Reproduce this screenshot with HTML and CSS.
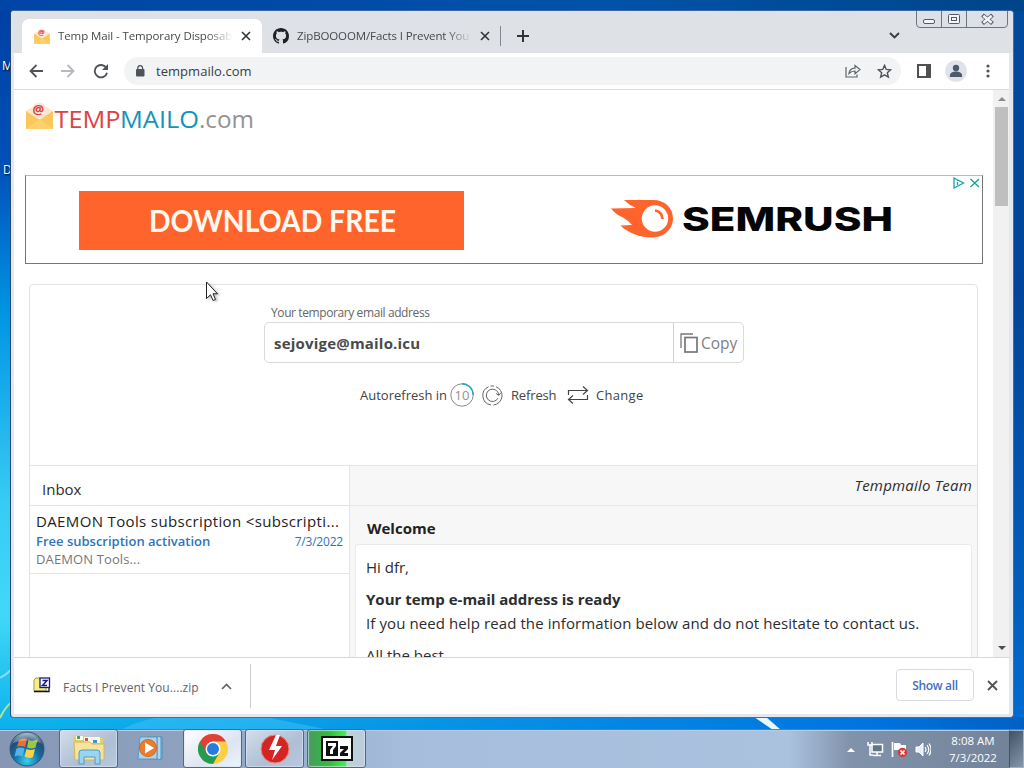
FILE: index.html
```html
<!DOCTYPE html>
<html lang="en">
<head>
<meta charset="utf-8">
<title>Temp Mail - Temporary Disposable Email</title>
<link rel="stylesheet" href="styles.css">
</head>
<body>
<div class="desktop">
  <svg class="wallpaper" viewBox="0 0 1024 768">
    <path d="M0 678 Q7 674 12 669" stroke="#8bdcff" stroke-width="2" fill="none"/>
    <path d="M0 718 Q5 707 12 702" stroke="#b3e58b" stroke-width="2" fill="none"/>
    <path d="M120 730 Q150 714 180 718 L270 718 L330 730Z" fill="#48c6fb" opacity=".45"/>
    <path d="M754 717 L766 717 L781 730 L773 730Z" fill="#e8f8ff"/>
  </svg>
  <span class="icon-label label-m">M</span>
  <span class="icon-label label-d">D</span>

  <div class="workspace">
    <div class="window">
      <div class="tabstrip">
        <div class="tab tab-active">
          <svg class="mail-icon" width="16" height="15" viewBox="0 0 27 26"><use href="#mail"/></svg>
          <span class="tab-title title-one">Temp Mail - Temporary Disposab</span>
          <svg width="10" height="10" viewBox="0 0 10 10"><path d="M1 1l8 8M9 1l-8 8" stroke="#303338" stroke-width="1.6"/></svg>
        </div>
        <div class="tab tab-idle">
          <svg width="16" height="16" viewBox="0 0 16 16"><path fill="#1f2328" d="M8 0C3.58 0 0 3.58 0 8c0 3.54 2.29 6.53 5.47 7.59.4.07.55-.17.55-.38 0-.19-.01-.82-.01-1.49-2.01.37-2.53-.49-2.69-.94-.09-.23-.48-.94-.82-1.13-.28-.15-.68-.52-.01-.53.63-.01 1.08.58 1.23.82.72 1.21 1.87.87 2.33.66.07-.52.28-.87.51-1.07-1.78-.2-3.64-.89-3.64-3.95 0-.87.31-1.59.82-2.15-.08-.2-.36-1.02.08-2.12 0 0 .67-.21 2.2.82.64-.18 1.32-.27 2-.27s1.36.09 2 .27c1.53-1.04 2.2-.82 2.2-.82.44 1.1.16 1.92.08 2.12.51.56.82 1.27.82 2.15 0 3.07-1.87 3.75-3.65 3.95.29.25.54.73.54 1.48 0 1.07-.01 1.93-.01 2.2 0 .21.15.46.55.38A8.01 8.01 0 0 0 16 8c0-4.42-3.58-8-8-8z"/></svg>
          <span class="tab-title title-two">ZipBOOOOM/Facts I Prevent You</span>
          <svg width="10" height="10" viewBox="0 0 10 10"><path d="M1 1l8 8M9 1l-8 8" stroke="#303338" stroke-width="1.6"/></svg>
        </div>
        <span class="tab-sep"></span>
        <svg class="new-tab" width="12" height="12" viewBox="0 0 12 12"><path d="M6 0v12M0 6h12" stroke="#303338" stroke-width="2"/></svg>
        <svg class="tab-search" width="11" height="7" viewBox="0 0 11 7"><path d="M1 1l4.500 4.500L10 1" fill="none" stroke="#3a3d42" stroke-width="1.900"/></svg>
        <svg class="caption" width="94" height="18" viewBox="0 0 94 18">
          <path d="M1.500 0v13q0 3.500 3.500 3.500h84q3.500 0 3.500-3.500V0M26.500 0v16.500M51.500 0v16.500" fill="#dde0e6" stroke="#6f757f"/>
          <g fill="#f4f5f7" stroke="#535a66"><rect x="8.500" y="8.500" width="11" height="4" rx="1.500"/><rect x="33.500" y="3.500" width="11" height="9" rx="1"/><rect x="36.500" y="6.500" width="5" height="3"/></g>
          <path d="M67.500 4l10 8.500M77.500 4l-10 8.500" stroke="#535a66" stroke-width="4.200"/><path d="M68.300 4.700l8.400 7.100M76.700 4.700l-8.400 7.100" stroke="#f4f5f7" stroke-width="2.500"/>
        </svg>
      </div>

      <div class="toolbar">
        <svg width="14" height="14" viewBox="0 0 14 14"><path d="M14 7H1.500M7.500 1l-6 6 6 6" fill="none" stroke="#505459" stroke-width="1.800"/></svg>
        <svg width="14" height="14" viewBox="0 0 14 14"><path d="M0 7h12.500M6.500 1l6 6-6 6" fill="none" stroke="#b6b9bd" stroke-width="1.800"/></svg>
        <svg width="16" height="16" viewBox="0 0 16 16"><path d="M13.200 4.800A6.200 6.200 0 1 0 14 9.700" fill="none" stroke="#505459" stroke-width="1.900"/><path d="M15 1V7H9z" fill="#505459"/></svg>
        <div class="omnibox">
          <svg width="10" height="12" viewBox="0 0 10 12"><rect x="1" y="4" width="8.500" height="7.500" rx="1" fill="#50545a"/><path d="M2.800 5V3a2.400 2.400 0 0 1 4.800 0v2" fill="none" stroke="#50545a" stroke-width="1.300"/></svg>
          <span class="url">tempmailo.com</span>
          <svg class="share" width="16" height="14" viewBox="0 0 16 14"><path d="M1 3v10h11v-2.500M4 9.500C4.500 6 7 4.300 10 4.200V1.500L15 5.600 10 9.800V7Q6.500 7 4 9.500Z" fill="none" stroke="#5f6368" stroke-width="1.200"/></svg>
          <svg width="15" height="15" viewBox="0 0 16 16"><path d="M8 1.500l1.900 4.300 4.700.4-3.600 3.100 1.100 4.600L8 11.500l-4.100 2.400L5 9.300 1.400 6.200l4.700-.4z" fill="none" stroke="#505459" stroke-width="1.500"/></svg>
        </div>
        <svg class="side" width="14" height="14" viewBox="0 0 14 14"><rect x="1" y="1" width="12" height="12" fill="#fff" stroke="#505050" stroke-width="2"/><path d="M9 0h5v14H9z" fill="#505050"/></svg>
        <svg class="avatar" width="22" height="22" viewBox="0 0 22 22"><circle cx="11" cy="11" r="10.800" fill="#dfe2e8"/><circle cx="11" cy="8" r="3.200" fill="#4f596b"/><path d="M4.900 17v-1.500c0-5.200 12.200-5.200 12.200 0V17z" fill="#4f596b"/></svg>
        <svg class="dots" width="4" height="14" viewBox="0 0 4 14" fill="#505459"><circle cx="2" cy="2" r="1.600"/><circle cx="2" cy="7" r="1.600"/><circle cx="2" cy="12" r="1.600"/></svg>
      </div>

      <div class="viewport">
        <main class="page">
          <header class="site-head">
            <svg class="logo" width="230" height="30" viewBox="0 0 230 30">
              <g id="mail"><path d="M0 8L13.500 0 27 8v18H0z" fill="#fce7c7"/><circle cx="13" cy="7" r="7.500" fill="#fbe9df"/><path d="M0 8l13.500 9L27 8v18H0z" fill="#f9c75c"/><path d="M0 26l13.500-10L27 26z" fill="#ffd06b"/><text x="6.500" y="11" class="at">@</text></g>
              <g class="logo-text"><text x="28.500" y="25" fill="#dc4348" textLength="66" lengthAdjust="spacingAndGlyphs">TEMP</text><text x="94" y="25" fill="#1694b7" textLength="79" lengthAdjust="spacingAndGlyphs">MAILO</text><text x="173" y="25" fill="#939393" textLength="55" lengthAdjust="spacingAndGlyphs">.com</text></g>
            </svg>
          </header>

          <section class="ad">
            <div class="ad-button"><svg width="250" height="44" viewBox="0 0 250 44"><text class="download" x="2" y="34" textLength="247" lengthAdjust="spacingAndGlyphs">DOWNLOAD FREE</text></svg></div>
            <svg class="semrush" width="284" height="42" viewBox="0 0 284 42">
              <path d="M13 2H42C54 2 62 10 62 20.500S53 39.500 41 39.500C29 39.500 17 35 9.500 27.500L21 27Q18 23 12 19.500Q4 16 0 10.500L25 10Q18 7 13 2Z" fill="#ff642d"/><circle cx="44" cy="20.500" r="13.200" fill="#fff"/><path d="M44 12.500Q51 13.500 51.500 21" fill="none" stroke="#ff642d" stroke-width="2.700"/>
              <text class="brand" x="71" y="33" textLength="211" lengthAdjust="spacingAndGlyphs">SEMRUSH</text>
            </svg>
            <svg class="ad-controls" width="30" height="14" viewBox="0 0 30 14"><path d="M2 2v10l9.500-5zM5.500 6v3M5.500 4v1" fill="none" stroke="#12a5a2" stroke-width="1.300"/><path d="M18.500 3l8.500 8M27 3l-8.500 8" stroke="#12a58d" stroke-width="1.300"/></svg>
          </section>

          <section class="mailbox">
            <div class="address-area">
              <label class="address-label">Your temporary email address</label>
              <div class="address">
                <strong>sejovige@mailo.icu</strong>
                <div class="copy"><svg width="18" height="20" viewBox="0 0 18 20" fill="none" stroke="#777"><path d="M1 15V1h12" stroke-width="1.300"/><rect x="5" y="4.500" width="12" height="14.500" stroke-width="1.700"/></svg><span>Copy</span></div>
              </div>
              <div class="actions">
                <span class="auto">Autorefresh in</span>
                <span class="timer"><svg width="24" height="24" viewBox="0 0 24 24" fill="none"><circle cx="12" cy="12" r="11.200" stroke="#8b8b8b"/><path d="M12 .8A11.200 11.200 0 0 1 23.200 12" stroke="#22a6c5" stroke-width="1.400"/></svg><b>10</b></span>
                <svg class="refresh-icon" width="21" height="21" viewBox="0 0 21 21" fill="none" stroke="#666"><path d="M6.500 1.800A9.500 9.500 0 0 0 9 19.900M11.500 20A9.500 9.500 0 0 0 14 1.700M8.500 1.100A9.500 9.500 0 0 1 12 1.100"/><path d="M16 13.200A6.200 6.200 0 1 1 16.700 10M14.200 8.500l2.500 2 2-2.500"/></svg>
                <span class="refresh">Refresh</span>
                <svg class="change-icon" width="22" height="18" viewBox="0 0 22 18" fill="none" stroke="#444" stroke-width="1.200"><path d="M1.500 9V4.500H20M16 .5l4.500 4-4.500 4M20.500 9v4.500H2M6 9.500l-4.500 4 4.500 4"/></svg>
                <span class="change">Change</span>
              </div>
            </div>
            <div class="columns">
              <aside class="inbox">
                <h2>Inbox</h2>
                <article class="mail-row">
                  <div class="sender">DAEMON Tools subscription &lt;subscripti...</div>
                  <div class="subject"><b>Free subscription activation</b><time>7/3/2022</time></div>
                  <p>DAEMON Tools...</p>
                </article>
              </aside>
              <section class="message">
                <div class="from"><em>Tempmailo Team</em></div>
                <h3>Welcome</h3>
                <div class="letter">
                  <p class="hi">Hi dfr,</p>
                  <p class="ready">Your temp e-mail address is ready</p>
                  <p class="help">If you need help read the information below and do not hesitate to contact us.</p>
                  <p class="best">All the best</p>
                </div>
              </section>
            </div>
          </section>
        </main>
        <div class="scrollbar"><i class="up"></i><i class="thumb"></i><i class="down"></i></div>
      </div>

      <div class="downloads">
        <div class="file">
          <svg class="zip-icon" width="18" height="16" viewBox="0 0 18 16"><path d="M1 3l2-2h4v2h6v11H1z" fill="#f4ee87" stroke="#a09b4a"/><path d="M1 14.500h15V11" fill="none" stroke="#111" stroke-width="1.300"/><rect x="7" y="1" width="9.500" height="9.500" fill="#fff" stroke="#1a1a85" stroke-width="1.300"/><path d="M9.500 3.500h4.500l-4.500 5H14" fill="none" stroke="#1a1a85" stroke-width="1.500"/></svg>
          <span class="filename">Facts I Prevent You....zip</span>
          <svg width="11" height="7" viewBox="0 0 11 7"><path d="M1 6l4.500-4.500L10 6" fill="none" stroke="#5f6368" stroke-width="1.600"/></svg>
        </div>
        <span class="show-all"><span>Show all</span></span>
        <svg class="close-bar" width="11" height="11" viewBox="0 0 11 11"><path d="M1 1l9 9M10 1l-9 9" stroke="#50545a" stroke-width="1.800"/></svg>
      </div>
    </div>
  </div>

  <footer class="taskbar">
    <svg class="start" width="36" height="36" viewBox="0 0 36 36">
      <defs><radialGradient id="orb" cx=".5" cy=".85" r=".85"><stop offset="0" stop-color="#38d0ef"/><stop offset=".45" stop-color="#126da3"/><stop offset=".75" stop-color="#234d75"/><stop offset="1" stop-color="#9eb7cb"/></radialGradient></defs>
      <circle cx="18" cy="18" r="17" fill="url(#orb)" stroke="#365571"/>
      <path d="M10 9q4-3 8-1l-2 8q-4-2-8 0z" fill="#ed6e33"/><path d="M19.500 9q4 2 9-.5l-2 8q-4 2-8.500 0z" fill="#9cc93c"/><path d="M7.500 17.500q4-2 8 0l-2 8q-4-2-8 0z" fill="#54b4ea"/><path d="M17.500 18q4 2 8.500 0l-2 8q-4 2-8.500-.500z" fill="#fbd14b"/>
      <path d="M4 12Q18-8 32 12 17 7 4 12z" fill="#fff" opacity=".25"/>
    </svg>
    <div class="task framed">
      <svg width="34" height="32" viewBox="0 0 34 32"><path d="M1 5l2-3h9l2 3h17v21H3z" fill="#e4cf72"/><path d="M12 4h16v6H12z" fill="#fff8ea"/><path d="M4 3h7v4H4z" fill="#fff"/><path d="M5 3h3v3H5z" fill="#4aa35a"/><path d="M13 5h3v3h-3z" fill="#d75339"/><path d="M21 7h4v3h-4z" fill="#3f91d0"/><path d="M2 9h16l2 2h12v16H3z" fill="#f5e59a" stroke="#cfb95d"/><path d="M7 31V20q0-3 3-3h15q3 0 3 3v11h-5v-7H12v7z" fill="#9bd4f0" stroke="#5199c7"/></svg>
    </div>
    <div class="task"><svg width="28" height="26" viewBox="0 0 28 26"><path d="M11 1h14v22H11z" fill="#79b5dc" stroke="#5289b4"/><path d="M3 1h17v22H1z" fill="#a8d4ee" stroke="#5a98c3"/><path d="M22 1v22" stroke="#e6f7ff"/><circle cx="11" cy="12" r="8.500" fill="#ed7c2b" stroke="#cf651e"/><path d="M8 6.500v11l9-5.500z" fill="#fff"/></svg></div>
    <div class="task framed active"><svg width="30" height="30" viewBox="0 0 30 30"><circle cx="15" cy="15" r="15" fill="#ffcf42"/><path d="M15 15L2 7.500A15 15 0 0 1 28 7.500H15z" fill="#df4234"/><path d="M2 7.500A15 15 0 0 0 15 30L21.500 18.700 15 15z" fill="#269b50"/><path d="M2 7.500l6.500 11.200L15 15 15 7.500z" fill="#df4234"/><circle cx="15" cy="15" r="7.500" fill="#fff"/><circle cx="15" cy="15" r="6" fill="#287be0"/></svg></div>
    <div class="task framed"><svg width="30" height="30" viewBox="0 0 30 30"><circle cx="15" cy="15" r="14" fill="#d32524" stroke="#ee8981"/><path d="M16 1L9 16h6l-3 10 10-14h-6l4-11z" fill="#fff"/></svg></div>
    <div class="task framed zip"><svg width="32" height="25" viewBox="0 0 32 25"><rect width="32" height="25" fill="#111"/><path d="M2 2h28v21H2z" fill="#fff"/><path d="M5 5h12v15H5z" fill="#111"/><path d="M7 7h8v3l-3 4v4H9v-4l3-4H7z" fill="#fff"/><path d="M19 10h8v3l-4 4h4v3h-8v-3l4-4h-4z" fill="#111"/></svg></div>
    <div class="tray">
      <svg width="8" height="5" viewBox="0 0 8 5"><path d="M0 5l4-4 4 4z" fill="#fff"/></svg>
      <svg class="network" width="17" height="16" viewBox="0 0 17 16"><path d="M5 3.500h10.500V11H5z" fill="#62768a" stroke="#fff" stroke-width="1.500"/><path d="M10 11v3M6 14.500h8M3 5v9h3M1 1v3h4V1M3 4v2" fill="none" stroke="#fff" stroke-width="1.500"/></svg>
      <svg class="flag" width="17" height="17" viewBox="0 0 17 17"><path d="M1.500 1v15" stroke="#fff" stroke-width="1.700"/><path d="M3 2h6l1 2h5v6H9L8 9H3z" fill="#fff"/><circle cx="11.500" cy="11.500" r="4.700" fill="#d73a3d"/><path d="M9.500 9.500l4 4M13.500 9.500l-4 4" stroke="#fff" stroke-width="1.600"/></svg>
      <svg width="16" height="15" viewBox="0 0 16 15"><path d="M1 5h3l4-4v13l-4-4H1z" fill="#e9f0f4" stroke="#fff"/><path d="M10 5q2 2.500 0 5M12 3q3.500 4.500 0 9M14 1.500q4 6 0 12" fill="none" stroke="#fff" stroke-width="1.200"/></svg>
      <div class="clock"><span>8:08 AM</span><span>7/3/2022</span></div>
      <i class="peek"></i>
    </div>
  </footer>
  <svg class="cursor" width="16" height="22" viewBox="0 0 16 22"><path d="M1.500 1v16.500l4-3.700L8 19.500l2.500-1L8 12.800h4.500z" fill="#fff" stroke="#222"/></svg>
</div>
</body>
</html>
```

FILE: styles.css
```css
* { box-sizing: border-box; }
body { margin: 0; overflow: hidden; font-family: "Open Sans", "Noto Sans", sans-serif; color: #2b2d30; }
h2, h3, p { margin: 0; font-weight: 400; }
svg { display: block; flex: none; }
span, b, strong, em, time, label { white-space: nowrap; }

.desktop { position: relative; width: 1024px; height: 768px; display: flex; flex-direction: column; overflow: hidden;
  background: linear-gradient(90deg, transparent 0 2%, #0074df 85%, #0061c5) 0 717px / 100% 12px no-repeat,
    linear-gradient(#004a9d, #00459b 40%, #0060be 85%, #006bd3) 1000px 11px / 24px 706px no-repeat,
    linear-gradient(90deg, #0045a6, #0052a8 60%, #00458a) 0 0 / 100% 11px no-repeat,
    linear-gradient(#003fa4, #0051b8 22%, #0093e2 40%, #36cbf4 65%, #42d8f7 80%, #0bb0eb 95%, #12a9ed); }
.wallpaper { position: absolute; inset: 0; width: 1024px; height: 768px; }
.icon-label { position: absolute; font-size: 12px; line-height: 14px; color: #fff; text-shadow: 1px 1px 2px #000; }
.label-m { left: 2px; top: 59px; }
.label-d { left: 3px; top: 163px; }
.cursor { position: absolute; left: 205px; top: 281px; filter: drop-shadow(2px 1px 1px #9999); }

.workspace { position: relative; height: 729px; flex: none; padding: 10px; }
.window { width: 1004px; height: 708px; border: 1px solid #506b8e; border-left-color: #244972; border-top-color: #3b64a0; border-radius: 4px; background: #e4e7ed; display: flex; flex-direction: column; overflow: hidden; }
.tabstrip { height: 42px; flex: none; display: flex; align-items: flex-end; background: #dee1e6; position: relative; padding-left: 11px; }
.tab { display: flex; align-items: center; height: 34px; }
.tab-active { width: 240px; padding: 0 11px 0 12px; background: #fff; border-radius: 7px 7px 0 0; }
.tab-title { overflow: hidden; font-size: 11.500px; line-height: 20px; color: #45484d; margin-left: 8px; -webkit-mask-image: linear-gradient(90deg, #000 85%, transparent); mask-image: linear-gradient(90deg, #000 85%, transparent); }
.title-one { width: 175px; margin-right: 8px; letter-spacing: -.1px; }
.title-two { width: 175px; margin-right: 8px; letter-spacing: -.12px; }
.tab-idle { padding-left: 11px; }
.tab-sep { width: 1px; height: 20px; background: #858a91; margin: 0 16px 7px 10px; }
.new-tab { margin-bottom: 11px; }
.tab-search { margin: 0 0 14px 360px; }
.caption { position: absolute; right: 4px; top: 0; }

.toolbar { height: 37px; margin: 0 4px 0 3px; flex: none; display: flex; align-items: center; padding-left: 15px; background: #fff; gap: 18px; border-bottom: 1px solid #d9dbdf; }
.omnibox { width: 777px; height: 28px; border-radius: 14px; margin-left: -3px; background: #f1f3f4; display: flex; align-items: center; padding: 0 9px 0 11px; }
.url { font-size: 13px; color: #3b3e43; margin: 0 auto 0 11px; letter-spacing: .04px; }
.share { margin-right: 16px; }
.side { margin-left: -2px; }
.avatar { margin-left: -4px; }
.dots { margin-left: 1px; }

.viewport { height: 567px; margin: 0 4px 0 3px; flex: none; display: flex; background: #fff; overflow: hidden; }
.page { width: 979px; height: 567px; padding: 15px 10px 0 11px; display: flex; flex-direction: column; overflow: hidden; }
.site-head { height: 70px; flex: none; padding-left: 1px; }
.logo { overflow: visible; margin-top: -2px; }
.at { font: 700 13px "Open Sans", sans-serif; fill: #d54732; }
.logo-text { font: 24px "Open Sans", sans-serif; }
.ad { position: relative; width: 958px; height: 89px; flex: none; border: 1px solid #777; border-top-color: #bbb; display: flex; align-items: center; padding-left: 53px; }
.ad-button { width: 385px; height: 59px; margin-top: 1px; background: #ff642d; display: flex; align-items: center; justify-content: center; }
.download { font: 700 30px Lato, sans-serif; fill: #fff8ef; }
.semrush { margin-left: 147px; margin-bottom: 1px; }
.brand { font: 800 33px Inter, sans-serif; fill: #050505; }
.ad-controls { position: absolute; top: 0; right: 0; background: #fff; }

.mailbox { width: 949px; height: 420px; flex: none; margin: 20px 0 0 4px; border: 1px solid #e0e3e4; border-radius: 4px; display: flex; flex-direction: column; }
.address-area { height: 180px; flex: none; padding-left: 234px; display: flex; flex-direction: column; }
.address-label { padding-left: 7px; margin-top: 19px; font-size: 12px; line-height: 18px; color: #666; letter-spacing: -.4px; }
.address { width: 480px; height: 41px; border: 1px solid #d8dadd; border-radius: 5px; display: flex; align-items: center; padding-left: 9px; }
.address strong { font-size: 15px; color: #484a4c; letter-spacing: .2px; }
.copy { margin-left: auto; width: 70px; height: 39px; border-left: 1px solid #d0d2d4; display: flex; align-items: center; padding-left: 6px; gap: 3px; color: #808080; font-size: 15.500px; }
.actions { display: flex; align-items: center; height: 24px; margin: 20px 0 0 96px; font-size: 13px; color: #424447; }
.auto { width: 87px; }
.timer { position: relative; margin-left: 3px; }
.timer b { position: absolute; inset: 0; display: grid; place-items: center; font-weight: 400; color: #929292; }
.refresh-icon { margin-left: 8px; }
.refresh { width: 47px; margin-left: 8px; letter-spacing: -.15px; }
.change-icon { margin-left: 9px; }
.change { margin-left: 7px; letter-spacing: .3px; }
.columns { display: flex; flex: 1; border-top: 1px solid #e2e4e6; }
.inbox { width: 320px; border-right: 1px solid #e2e4e6; }
.inbox h2 { height: 40px; border-bottom: 1px solid #e2e4e6; padding: 4px 0 0 12px; font-size: 15px; line-height: 38px; }
.mail-row { height: 68px; border-bottom: 1px solid #e2e8e7; padding: 4px 6px 0; }
.sender { font-size: 15px; line-height: 22px; white-space: nowrap; letter-spacing: .36px; color: #1f2123; }
.subject { display: flex; justify-content: space-between; align-items: center; height: 18px; font-size: 13px; color: #2d75bb; }
.subject b { font-weight: 600; }
.subject time { font-size: 12px; letter-spacing: -.2px; }
.mail-row p { font-size: 13px; line-height: 19px; color: #777; letter-spacing: .12px; }
.message { flex: 1; background: #f7f7f7; padding-right: 5px; padding-left: 5px; }
.from { height: 40px; margin: 0 -5px; border-bottom: 1px solid #e5e7e8; text-align: right; padding-right: 5px; font-size: 15px; line-height: 38px; letter-spacing: .2px; }
.message h3 { height: 38px; padding-left: 12px; font-size: 15px; line-height: 44px; font-weight: 700; color: #222; }
.letter { height: 200px; background: #fff; border: 1px solid #e9ebec; border-radius: 3px; padding: 10px; font-size: 15px; line-height: 24px; }
.letter p { white-space: nowrap; }
.ready { font-weight: 700; margin-top: 8px; }
.help { letter-spacing: .095px; }
.best { margin-top: 8px; }
.scrollbar { width: 16px; flex: none; padding: 0 1px 0 2px; background: #f1f1f1; display: flex; flex-direction: column; align-items: center; }
.up, .down { border: 4px solid transparent; }
.up { border-bottom-color: #8b8b8b; border-top: 0; margin: 7px 0 6px; }
.thumb { width: 13px; height: 99px; background: #bfbfbf; }
.down { border-top-color: #4d4d4d; border-bottom: 0; margin: auto 0 7px; }

.downloads { height: 57px; margin: 0 4px 0 3px; flex: none; background: #fff; border-top: 1px solid #d5d7da; display: flex; align-items: center; padding-right: 11px; }
.file { width: 237px; height: 44px; border-right: 1px solid #c9cbcf; display: flex; align-items: center; padding-left: 19px; }
.zip-icon { margin-top: -3px; }
.filename { font-size: 12px; color: #5f6368; width: 136px; margin: 2px 22px 0 12px; letter-spacing: .05px; }
.show-all { width: 78px; height: 32px; margin: -2px 0 0 auto; border: 1px solid #d7dade; border-radius: 4px; color: #416fc5; font-size: 12px; font-weight: 600; letter-spacing: -.3px; display: grid; place-items: center; }
.close-bar { margin: -2px 0 0 13px; }

.taskbar { height: 39px; flex: none; position: relative; display: flex; align-items: center; border-top: 1px solid #667a92; background: linear-gradient(90deg, #8697b5, #8ea2c0 18%, #a6bddc 40%, #abc2df 77%, #8193ab 83%, #718198); box-shadow: inset 0 1px #b8cce1; padding-left: 9px; }
.task { width: 59px; height: 39px; display: grid; place-items: center; margin: -1px 3px 0 0; border-radius: 3px; }
.start { margin-right: 14px; }
.framed { border: 1px solid #526783; background: linear-gradient(145deg, #d3deec, #aebed4 60%, #b9cadf); box-shadow: inset 0 0 1px 1px #dce7f4aa; }
.active { background: linear-gradient(145deg, #fff, #dce5f1 60%, #edf4fa); }
.zip { background: linear-gradient(90deg, #4a9960, #30bd3c 38%, #47ed56 66%, #bbd4d5 68%, #bccbdc); }
.tray { margin-left: auto; height: 38px; display: flex; align-items: center; }
.network { margin-left: 12px; }
.flag { margin: 0 7px; }
.clock { width: 70px; margin-left: 7px; display: flex; flex-direction: column; align-items: center; color: #fff; font-size: 11.500px; line-height: 17px; }
.peek { width: 15px; height: 38px; margin-left: 1px; border: 1px solid #a0b1c2; border-left-color: #405469; background: linear-gradient(135deg, #415467, #8496aa); }
```
